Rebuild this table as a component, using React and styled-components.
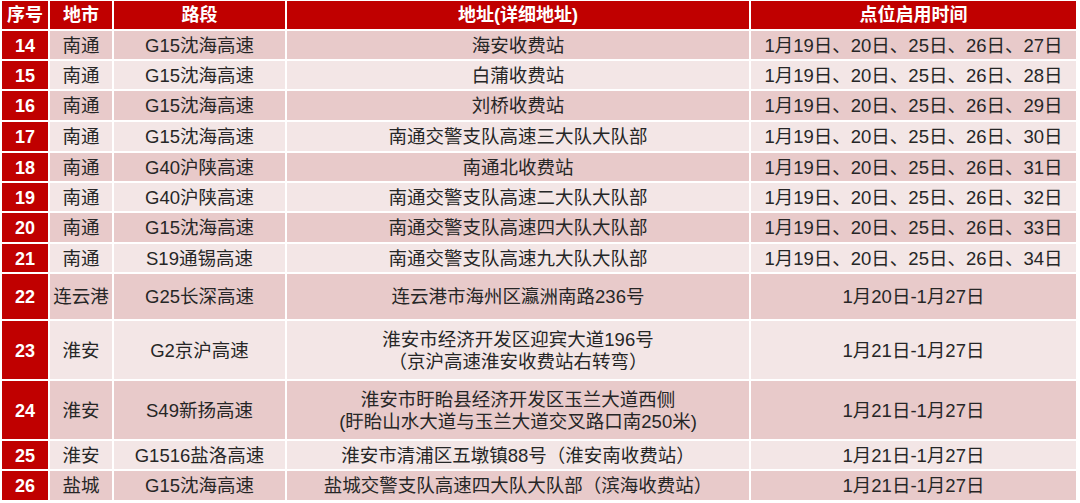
import styled, { createGlobalStyle } from 'styled-components';

const GlobalStyle = createGlobalStyle`
  html, body {
    margin: 0;
    padding: 0;
    background: #ffffff;
  }
  body {
    font-family: 'Liberation Sans', 'Noto Sans CJK SC', sans-serif;
  }
`;

const columns = '46px 62px 171px 462px 325px';

const rows = [
  { no: 14, city: '南通', road: 'G15沈海高速', addr: ['海安收费站'], time: '1月19日、20日、25日、26日、27日', h: 28 },
  { no: 15, city: '南通', road: 'G15沈海高速', addr: ['白蒲收费站'], time: '1月19日、20日、25日、26日、28日', h: 28 },
  { no: 16, city: '南通', road: 'G15沈海高速', addr: ['刘桥收费站'], time: '1月19日、20日、25日、26日、29日', h: 29 },
  { no: 17, city: '南通', road: 'G15沈海高速', addr: ['南通交警支队高速三大队大队部'], time: '1月19日、20日、25日、26日、30日', h: 29 },
  { no: 18, city: '南通', road: 'G40沪陕高速', addr: ['南通北收费站'], time: '1月19日、20日、25日、26日、31日', h: 28 },
  { no: 19, city: '南通', road: 'G40沪陕高速', addr: ['南通交警支队高速二大队大队部'], time: '1月19日、20日、25日、26日、32日', h: 28 },
  { no: 20, city: '南通', road: 'G15沈海高速', addr: ['南通交警支队高速四大队大队部'], time: '1月19日、20日、25日、26日、33日', h: 29 },
  { no: 21, city: '南通', road: 'S19通锡高速', addr: ['南通交警支队高速九大队大队部'], time: '1月19日、20日、25日、26日、34日', h: 28 },
  { no: 22, city: '连云港', road: 'G25长深高速', addr: ['连云港市海州区瀛洲南路236号'], time: '1月20日-1月27日', h: 45 },
  { no: 23, city: '淮安', road: 'G2京沪高速', addr: ['淮安市经济开发区迎宾大道196号', '（京沪高速淮安收费站右转弯）'], time: '1月21日-1月27日', h: 58 },
  { no: 24, city: '淮安', road: 'S49新扬高速', addr: ['淮安市盱眙县经济开发区玉兰大道西侧', '(盱眙山水大道与玉兰大道交叉路口南250米)'], time: '1月21日-1月27日', h: 58 },
  { no: 25, city: '淮安', road: 'G1516盐洛高速', addr: ['淮安市清浦区五墩镇88号（淮安南收费站）'], time: '1月21日-1月27日', h: 28 },
  { no: 26, city: '盐城', road: 'G15沈海高速', addr: ['盐城交警支队高速四大队大队部（滨海收费站）'], time: '1月21日-1月27日', h: 29 },
];

export default function App() {
  return (
    <>
      <GlobalStyle />
      <Table>
        <Row h={28}>
          <HeadCell>序号</HeadCell>
          <HeadCell>地市</HeadCell>
          <HeadCell>路段</HeadCell>
          <HeadCell>地址(详细地址)</HeadCell>
          <HeadCell>点位启用时间</HeadCell>
        </Row>
        {rows.map((r, i) => (
          <Row key={r.no} h={r.h}>
            <NoCell>{r.no}</NoCell>
            <Cell dark={i % 2 === 0}>{r.city}</Cell>
            <Cell dark={i % 2 === 0}>{r.road}</Cell>
            <Cell dark={i % 2 === 0}>
              <Lines>
                {r.addr.map((line) => (
                  <span key={line}>{line}</span>
                ))}
              </Lines>
            </Cell>
            <Cell dark={i % 2 === 0}>{r.time}</Cell>
          </Row>
        ))}
      </Table>
    </>
  );
}

const Table = styled.div`
  display: flex;
  flex-direction: column;
  gap: 2px;
  padding: 1px 0 0 2px;
  width: 1076px;
`;

const Row = styled.div`
  display: grid;
  grid-template-columns: ${columns};
  column-gap: 2px;
  height: ${(props) => props.h}px;
`;

const BaseCell = styled.div`
  display: flex;
  align-items: center;
  justify-content: center;
  font-size: 18.5px;
  line-height: 22px;
  padding-top: 1px;
  white-space: nowrap;
  text-align: center;
`;

const HeadCell = styled(BaseCell)`
  background: #c00000;
  color: #ffffff;
  font-weight: 700;
  font-size: 18px;
  padding-top: 0;
`;

const NoCell = styled(BaseCell)`
  background: #c00000;
  color: #ffffff;
  font-weight: 700;
  font-size: 18px;
`;

const Cell = styled(BaseCell)`
  background: ${(props) => (props.dark ? '#e8caca' : '#f3e6e6')};
  color: #262626;
`;

const Lines = styled.div`
  display: flex;
  flex-direction: column;
  align-items: center;
`;
